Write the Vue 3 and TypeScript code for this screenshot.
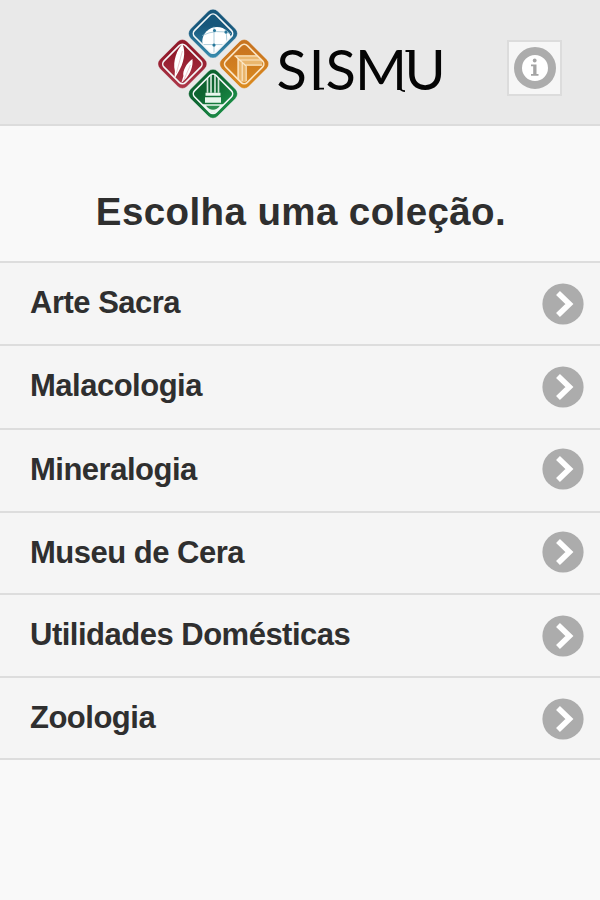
<script setup lang="ts">
interface Collection {
  name: string
  size: 'regular' | 'tall'
}

const collections: Collection[] = [
  { name: 'Arte Sacra', size: 'regular' },
  { name: 'Malacologia', size: 'tall' },
  { name: 'Mineralogia', size: 'regular' },
  { name: 'Museu de Cera', size: 'regular' },
  { name: 'Utilidades Domésticas', size: 'regular' },
  { name: 'Zoologia', size: 'regular' },
]
</script>

<template>
  <div class="page">
    <header class="header">
      <svg class="logo" width="292" height="122" viewBox="155 0 292 122" role="img" aria-label="SISMU">
        <defs>
          <linearGradient id="blue" x1="0" y1="0" x2="1" y2="1">
            <stop offset="0.35" stop-color="#17577b" />
            <stop offset="1" stop-color="#3b91b3" />
          </linearGradient>
          <linearGradient id="red" x1="0" y1="0" x2="1" y2="1">
            <stop offset="0.3" stop-color="#921a2b" />
            <stop offset="1" stop-color="#b03a4c" />
          </linearGradient>
          <linearGradient id="orange" x1="0" y1="0" x2="1" y2="1">
            <stop offset="0.2" stop-color="#c8741f" />
            <stop offset="1" stop-color="#dd8d20" />
          </linearGradient>
          <linearGradient id="green" x1="0" y1="0.5" x2="1" y2="0.5">
            <stop offset="0.3" stop-color="#0d6430" />
            <stop offset="1" stop-color="#1a8a45" />
          </linearGradient>
          <clipPath id="tile"><rect x="-15" y="-15" width="30" height="30" rx="4.5" transform="rotate(45)" /></clipPath>
        </defs>

        <g transform="translate(213 33.6)">
          <rect class="tile" x="-19.2" y="-19.2" width="38.4" height="38.4" rx="6.5" fill="url(#blue)" transform="rotate(45)" />
          <g clip-path="url(#tile)">
            <circle cx="4" cy="8" r="14.7" fill="#fff" />
            <path d="M-11 2Q3-5 18 0M-12 11H17M1-7V21M12-4Q16 6 11 17" fill="none" stroke="#8ab7cc" stroke-width="0.7" />
            <g fill="#28779a"><circle cx="1.5" cy="-3" r="1.5" /><circle cx="13" cy="-1.5" r="1.6" /><circle cx="1" cy="11.5" r="1.6" /></g>
          </g>
          <rect class="inset" x="-15.2" y="-15.2" width="30.4" height="30.4" rx="4.5" transform="rotate(45)" />
        </g>

        <g transform="translate(182.4 64)">
          <rect class="tile" x="-19.2" y="-19.2" width="38.4" height="38.4" rx="6.5" fill="url(#red)" transform="rotate(45)" />
          <g clip-path="url(#tile)" fill="#fff">
            <path d="M0-20C-5-15-10-3-7.5 7L-8 15L-4 8C1 0 4-12 0-20Z" />
            <path d="M10-5C4-1 0 7 1 12L-1 19L4 14C8 9 11 2 10-5Z" />
            <path d="M0-13L-6 9M8 1L1 17" fill="none" stroke="#dda5af" stroke-width="0.6" />
          </g>
          <rect class="inset" x="-15.2" y="-15.2" width="30.4" height="30.4" rx="4.5" transform="rotate(45)" />
        </g>

        <g transform="translate(244.2 64)">
          <rect class="tile" x="-19.2" y="-19.2" width="38.4" height="38.4" rx="6.5" fill="url(#orange)" transform="rotate(45)" />
          <g clip-path="url(#tile)">
            <path d="M-9-9H18V2H2V18H-7V-5Z" fill="#eab66d" />
            <path d="M-10-8H18M-5-4H18M0 1H18M-6-5V17M-2-1V17M2 2V17M-9-8L2 2" fill="none" stroke="#fbe6c6" stroke-width="1.2" />
          </g>
          <rect class="inset warm" x="-15.2" y="-15.2" width="30.4" height="30.4" rx="4.5" transform="rotate(45)" />
        </g>

        <g transform="translate(213 93.8)">
          <rect class="tile" x="-19.2" y="-19.2" width="38.4" height="38.4" rx="6.5" fill="url(#green)" transform="rotate(45)" />
          <g clip-path="url(#tile)">
            <path d="M-5.5-20V-1M-2-20V-1M2-20V-1M5.5-20V-1" stroke="#cfe6d7" stroke-width="1.7" />
            <path d="M-7.5-1H7.5V2H-7.5ZM-8 3.5H8V9H-8ZM-14 10.5H14V22H-14Z" fill="#e9f6ed" />
            <path d="M-7 12H7Q4 16 0 16T-7 12Z" fill="#2c8f50" />
          </g>
          <rect class="inset" x="-15.2" y="-15.2" width="30.4" height="30.4" rx="4.5" transform="rotate(45)" />
        </g>

        <text class="wordmark" x="276.5 308.8 325.5 355 404.5" y="89.5">SISMU</text>
        <path class="flourish" d="M315 88.6H324M399.5 88Q401.5 91 405 91.2M405.5 51H411" />
      </svg>

      <button class="info" type="button" aria-label="Info">
        <svg width="42" height="42" viewBox="0 0 42 42">
          <circle cx="21" cy="21" r="17" fill="#fff" stroke="#acacac" stroke-width="8" />
          <circle cx="20.7" cy="13.5" r="1.9" fill="#a4a4a4" />
          <path d="M17 17.5H22.5V27H24.5V28.8H17V27H19.2V19.3H17Z" fill="#a4a4a4" />
        </svg>
      </button>
    </header>

    <main>
      <h1 class="title">Escolha uma coleção.</h1>
      <ul class="list">
        <li v-for="item in collections" :key="item.name" class="row" :class="item.size">
          <span class="name">{{ item.name }}</span>
          <svg class="arrow" width="42" height="42" viewBox="0 0 42 42">
            <circle cx="21" cy="21" r="20.6" fill="#acacac" />
            <path d="M16 10L27.4 21L16 32" fill="none" stroke="#fff" stroke-width="5.6" />
          </svg>
        </li>
      </ul>
    </main>
  </div>
</template>

<style>
body {
  margin: 0;
  background: #f9f9f9;
}
</style>

<style scoped>
.page {
  width: 600px;
  height: 900px;
  overflow: hidden;
  background: #f9f9f9;
  color: #2f2f2f;
  font-family: "Liberation Sans", Arial, sans-serif;
}

.header {
  display: flex;
  box-sizing: border-box;
  height: 126px;
  padding: 0 38px 0 155px;
  justify-content: space-between;
  align-items: flex-start;
  background: #e9e9e9;
  border-bottom: 2px solid #dcdcdc;
}

.logo {
  display: block;
}

.tile {
  stroke: #f1f1f1;
  stroke-width: 0.4;
}

.inset {
  fill: none;
  stroke: #f4f7f8;
  stroke-width: 1.6;
}

.warm {
  stroke: #fbe6c6;
}

.wordmark {
  font-family: Lato, sans-serif;
  font-size: 56px;
  fill: #050505;
}

.flourish {
  fill: none;
  stroke: #050505;
  stroke-width: 1.8;
}

.info {
  display: flex;
  box-sizing: border-box;
  width: 55px;
  height: 56px;
  margin-top: 40px;
  padding: 0;
  align-items: center;
  justify-content: center;
  background: #f6f6f6;
  border: 2px solid #dcdcdc;
}

.title {
  margin: 0;
  padding: 64px 0 0 2px;
  height: 71px;
  font-size: 38.5px;
  line-height: 44px;
  letter-spacing: 0.4px;
  text-align: center;
  font-weight: bold;
}

.list {
  margin: 0;
  padding: 0;
  list-style: none;
  border-top: 2px solid #dddddd;
}

.row {
  display: flex;
  box-sizing: border-box;
  height: 82.5px;
  padding: 0 16px 0 30px;
  align-items: center;
  justify-content: space-between;
  background: #f5f5f5;
  border-bottom: 2px solid #dddddd;
}

.tall {
  height: 84.5px;
  padding-bottom: 2px;
}

.arrow {
  margin-top: 2px;
}

.row:nth-child(3) .arrow,
.row:nth-child(4) .arrow {
  margin-top: -2px;
}

.name {
  font-size: 31px;
  font-weight: bold;
  line-height: 36px;
  letter-spacing: -0.5px;
}
</style>
